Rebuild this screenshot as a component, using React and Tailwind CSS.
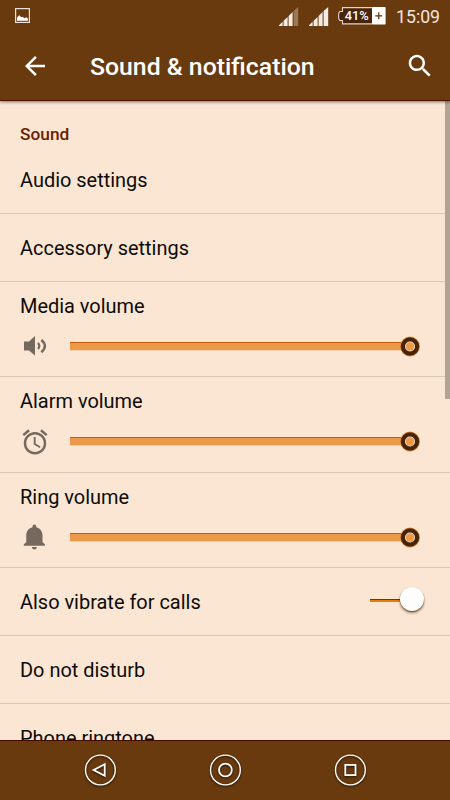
import { useState } from "react";

const volumes = [
  { label: "Media volume", icon: SpeakerIcon },
  { label: "Alarm volume", icon: AlarmIcon },
  { label: "Ring volume", icon: BellIcon },
];

function PictureIcon() {
  return (
    <svg width="15" height="15" viewBox="0 0 15 15" fill="none">
      <rect x="0.6" y="0.6" width="13.8" height="13.8" stroke="#eadfd8" strokeWidth="1.2" />
      <path d="M2 12.8V9.5L4.3 7.2L6.3 9.3L7.5 8.8L9.5 10.2L11 9.3L13 10.5V12.8Z" fill="#fff" />
    </svg>
  );
}

function SignalIcon({ weak }) {
  return (
    <svg width="20" height="19" viewBox="0 0 20 19" fill="#f4ece6">
      <path d="M0 19V18.2L3.6 14.8V19Z" />
      <path d="M4.6 19V13.8L8.6 10V19Z" />
      <path d="M9.6 19V9L13.6 5V19Z" />
      <path d="M14.6 19V4L19.2 0V19Z" opacity={weak ? 0.35 : 1} />
    </svg>
  );
}

function BatteryIcon() {
  return (
    <svg width="48" height="18" viewBox="0 0 48 18" fill="none">
      <path d="M34 0.6H4.5V4.5H2Q0.6 5 0.6 9Q0.6 13 2 13.5H4.5V16.9H34" fill="#48240a" stroke="#e3d4ca" strokeWidth="1.1" />
      <rect x="34" y="0" width="13.6" height="17.5" rx="0.8" fill="#fff" />
      <path d="M37.3 8.8H44.3M40.8 5.3V12.3" stroke="#5a300d" strokeWidth="1.2" />
      <text x="6.8" y="13.1" fontSize="12.5" fontWeight="500" fill="#fff" textLength="24" lengthAdjust="spacingAndGlyphs">
        41%
      </text>
    </svg>
  );
}

function BackIcon() {
  return (
    <svg width="30" height="30" viewBox="0 0 24 24" fill="#fff">
      <path d="M20 11H7.83l5.59-5.59L12 4l-8 8 8 8 1.41-1.41L7.83 13H20v-2z" />
    </svg>
  );
}

function SearchIcon() {
  return (
    <svg width="30" height="30" viewBox="0 0 24 24" fill="#fff">
      <path d="M15.5 14h-.79l-.28-.27C15.41 12.59 16 11.11 16 9.5 16 5.91 13.09 3 9.5 3S3 5.91 3 9.5 5.91 16 9.5 16c1.61 0 3.09-.59 4.23-1.57l.27.28v.79l5 4.99L20.49 19l-4.99-5zm-6 0C7.01 14 5 11.99 5 9.5S7.01 5 9.5 5 14 7.01 14 9.5 11.99 14 9.5 14z" />
    </svg>
  );
}

function SpeakerIcon() {
  return (
    <svg width="30" height="30" viewBox="0 0 30 30" fill="none">
      <path d="M4 10.5H9L15 5V24.5L9 19.5H4Z" fill="#75695d" />
      <path d="M18 12Q20.6 15 18 18" stroke="#75695d" strokeWidth="2.2" />
      <path d="M21.4 9Q28.4 15 21.4 21.2" stroke="#75695d" strokeWidth="2.5" />
    </svg>
  );
}

function AlarmIcon() {
  return (
    <svg width="30" height="30" viewBox="0 0 24 24" fill="#75695d">
      <path d="M22 5.72l-4.6-3.86-1.29 1.53 4.6 3.86L22 5.72zM7.88 3.39L6.6 1.86 2 5.71l1.29 1.53 4.59-3.85zM12.5 8H11v6l4.75 2.85.75-1.23-4-2.37V8zM12 4c-4.97 0-9 4.03-9 9s4.02 9 9 9c4.97 0 9-4.03 9-9s-4.03-9-9-9zm0 16c-3.87 0-7-3.13-7-7s3.13-7 7-7 7 3.13 7 7-3.13 7-7 7z" />
    </svg>
  );
}

function BellIcon() {
  return (
    <svg width="30" height="30" viewBox="0 0 24 24" fill="#75695d">
      <path d="M11.5 22c1.1 0 2-.9 2-2h-4c0 1.1.9 2 2 2zm6.5-6v-5.5c0-3.07-2.13-5.64-5-6.32V3.5c0-.83-.67-1.5-1.5-1.5S10 2.67 10 3.5v.68c-2.87.68-5 3.25-5 6.32V16l-2 2v1h17v-1l-2-2z" />
    </svg>
  );
}

function NavButton({ children }) {
  return (
    <button className="drop-shadow-[0_1px_1px_rgba(0,0,0,0.7)]">
      <svg className="block" width="32" height="32" viewBox="0 0 32 32" fill="none" stroke="#fff">
        <circle cx="16.4" cy="16" r="14.9" strokeWidth="1.4" />
        {children}
      </svg>
    </button>
  );
}

function Row({ label, children }) {
  return (
    <div className="flex h-[68px] shrink-0 items-center justify-between border-b border-[#dac9b9] pr-[26px] pl-5">
      <span className="pt-[2px]">{label}</span>
      {children}
    </div>
  );
}

function VolumeRow({ label, icon: Icon }) {
  return (
    <div className="h-[95.33px] shrink-0 border-b border-[#dac9b9] pt-[11px] pr-[30px] pl-5">
      <div className="h-[27px] leading-[27px]">{label}</div>
      <div className="mt-[11.4px] flex h-[30px] items-center">
        <Icon />
        <div className="ml-5 h-[9px] flex-1 border-t border-b border-t-[#c55f08] border-b-[#f3cfac] bg-[#ec994a]" />
        <svg className="-ml-[10px] h-[21px] w-5 shrink-0" viewBox="0 0 20 21">
          <circle cx="10" cy="10.5" r="9.9" fill="#e58a35" />
          <circle cx="10" cy="10.5" r="9.2" fill="#452407" />
          <circle cx="10" cy="10.5" r="5" fill="#fae6d3" />
          <circle cx="10" cy="10.5" r="4.2" fill="#ec994a" />
        </svg>
      </div>
    </div>
  );
}

export default function App() {
  const [vibrate, setVibrate] = useState(true);

  return (
    <div className="flex h-[800px] w-[450px] flex-col overflow-hidden bg-[#fae6d3] font-[Roboto,sans-serif] text-[19.95px] text-[#0d0b09]">
      <header className="relative z-10 h-[101px] shrink-0 border-b border-[#4e1300] bg-[#6a3a0f] text-white shadow-[0_1px_3px_rgba(0,0,0,0.5)]">
        <div className="flex h-[30px] items-start pt-[7px] pr-[9px] pl-[15px]">
          <div className="mt-px flex-1">
            <PictureIcon />
          </div>
          <div className="mr-[10px]">
            <SignalIcon weak />
          </div>
          <div className="mr-[9px]">
            <SignalIcon />
          </div>
          <BatteryIcon />
          <span className="ml-[10px] w-[45px] text-[17.7px] leading-[20px] text-[#f0e6df]">15:09</span>
        </div>
        <div className="flex h-[70px] items-center pt-px pr-[15px] pl-5">
          <button>
            <BackIcon />
          </button>
          <h1 className="ml-10 flex-1 pt-[3px] text-[24.8px] font-medium">Sound & notification</h1>
          <button>
            <SearchIcon />
          </button>
        </div>
      </header>

      <main className="relative flex flex-1 flex-col overflow-hidden">
        <h2 className="h-[45px] shrink-0 pt-5 pl-5 text-[17.3px] leading-[26px] font-medium text-[#6b2100]">Sound</h2>
        <Row label="Audio settings" />
        <Row label="Accessory settings" />
        {volumes.map((v) => (
          <VolumeRow key={v.label} label={v.label} icon={v.icon} />
        ))}
        <Row label="Also vibrate for calls">
          <button
            role="switch"
            aria-checked={vibrate}
            aria-label="Also vibrate for calls"
            onClick={() => setVibrate(!vibrate)}
            className={`flex w-[54px] items-center ${vibrate ? "" : "flex-row-reverse"}`}
          >
            <span className="mb-[2px] h-[3px] flex-1 border-t border-[#6a3a0f] bg-[#e67e0a]" />
            <span className="mb-[5px] h-6 w-6 rounded-full bg-[#fffdfb] shadow-[0_1px_1px_#8a4a10,0_2px_3px_rgba(0,0,0,0.4)]" />
          </button>
        </Row>
        <Row label="Do not disturb" />
        <Row label="Phone ringtone" />

        {/* scrollbar */}
        <div className="absolute top-0 right-0 h-[298px] w-[5px] bg-[#b2a394]" />
      </main>

      <nav className="flex h-[60px] shrink-0 items-center justify-center gap-[93px] border-t border-[#430800] bg-[#6a3a0f] pb-[2px]">
        <NavButton>
          <path d="M9.6 16L20.7 10.3V21.7Z" strokeWidth="1.8" />
        </NavButton>
        <NavButton>
          <circle cx="16.4" cy="16" r="6.4" strokeWidth="1.8" />
        </NavButton>
        <NavButton>
          <rect x="11.3" y="10.9" width="10.2" height="10.2" strokeWidth="1.8" />
        </NavButton>
      </nav>
    </div>
  );
}
